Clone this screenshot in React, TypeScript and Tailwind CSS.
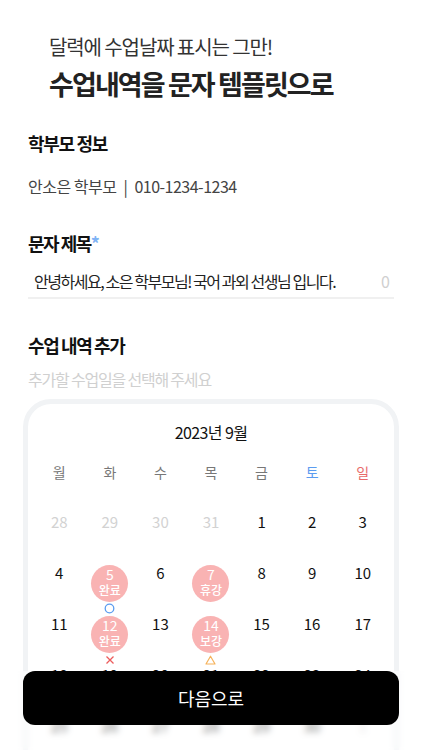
import React from 'react'

type Mark = 'o' | 'x' | 'tri'

interface Day {
  n: number
  muted?: boolean
  label?: string
  mark?: Mark
}

const weeks: Day[][] = [
  [{ n: 28, muted: true }, { n: 29, muted: true }, { n: 30, muted: true }, { n: 31, muted: true }, { n: 1 }, { n: 2 }, { n: 3 }],
  [{ n: 4 }, { n: 5, label: '완료', mark: 'o' }, { n: 6 }, { n: 7, label: '휴강' }, { n: 8 }, { n: 9 }, { n: 10 }],
  [{ n: 11 }, { n: 12, label: '완료', mark: 'x' }, { n: 13 }, { n: 14, label: '보강', mark: 'tri' }, { n: 15 }, { n: 16 }, { n: 17 }],
  [{ n: 18 }, { n: 19 }, { n: 20 }, { n: 21 }, { n: 22 }, { n: 23 }, { n: 24 }],
  [{ n: 25 }, { n: 26 }, { n: 27 }, { n: 28 }, { n: 29 }, { n: 30 }, { n: 1, muted: true }],
]

const weekdays = ['월', '화', '수', '목', '금', '토', '일']

function Marker({ type }: { type: Mark }) {
  if (type === 'o')
    return (
      <svg width="11" height="11" viewBox="0 0 11 11">
        <circle cx="5.5" cy="5.5" r="4.3" fill="none" stroke="#5b9cf0" strokeWidth="1.3" />
      </svg>
    )
  if (type === 'x')
    return (
      <svg width="10" height="10" viewBox="0 0 10 10">
        <path d="M1.5 1.5 L8.5 8.5 M8.5 1.5 L1.5 8.5" stroke="#ec5c5c" strokeWidth="1.3" />
      </svg>
    )
  return (
    <svg width="11" height="10" viewBox="0 0 11 10">
      <path d="M5.5 1.2 L10 9 L1 9 Z" fill="none" stroke="#f5b25a" strokeWidth="1.2" strokeLinejoin="round" />
    </svg>
  )
}

function DayCell({ day }: { day: Day }) {
  if (day.label) {
    return (
      <div className="flex h-[51px] flex-col items-center">
        <div className="flex h-[37px] w-[37px] flex-col items-center rounded-full bg-[#f9b3b3] pt-[2px] text-white">
          <span className="text-[14px] leading-[15px]">{day.n}</span>
          <span className="text-[12px] font-medium leading-[15px]">{day.label}</span>
        </div>
        {day.mark && (
          <div className="mt-[1px] flex h-[11px] items-center">
            <Marker type={day.mark} />
          </div>
        )}
      </div>
    )
  }
  return (
    <div className="flex h-[51px] flex-col items-center">
      <span className={`text-[15px] leading-[16px] ${day.muted ? 'text-[#d2d2d2]' : 'text-[#111]'}`}>{day.n}</span>
    </div>
  )
}

export default function App() {
  return (
    <div className="relative min-h-[750px] bg-white font-['Noto_Sans_CJK_KR','Noto_Sans',sans-serif]">
      <div className="px-[49px] pt-[35px]">
        <p className="text-[20px] leading-[24px] tracking-[-1.1px] text-[#333]">달력에 수업날짜 표시는 그만!</p>
        <h1 className="mt-[9px] text-[27px] font-bold leading-[32px] tracking-[-1.9px] text-[#222]">
          수업내역을 문자 템플릿으로
        </h1>
      </div>

      <div className="px-[28px]">
        <h2 className="mt-[32px] text-[18px] font-bold leading-[22px] tracking-[-1.3px] text-[#111]">학부모 정보</h2>
        <p className="mt-[22px] text-[16px] leading-[20px] tracking-[-0.5px] text-[#444]">
          안소은 학부모 <span className="mx-[4px]">|</span> 010-1234-1234
        </p>

        <h2 className="mt-[36px] text-[18px] font-bold leading-[22px] tracking-[-1.5px] text-[#111]">
          문자 제목<span className="text-[#7fb3f5]">*</span>
        </h2>
        <div className="mt-[17px] flex items-center justify-between border-b-2 border-[#f0f0f0] pb-[6px] pl-[6px] pr-[4px]">
          <span className="text-[16px] leading-[20px] tracking-[-1.45px] text-[#222]">
            안녕하세요, 소은 학부모님! 국어 과외 선생님 입니다.
          </span>
          <span className="text-[16px] leading-[20px] text-[#cfcfcf]">0</span>
        </div>

        <h2 className="mt-[35px] text-[18px] font-bold leading-[22px] tracking-[-1.4px] text-[#111]">수업 내역 추가</h2>
        <p className="mt-[13px] text-[16px] leading-[20px] tracking-[-1.2px] text-[#d0d0d0]">추가할 수업일을 선택해 주세요</p>
      </div>

      <div className="mx-[23px] mt-[10px] rounded-[28px] border-[5px] border-[#f1f3f5] pb-[20px] pt-[16px]">
        <p className="text-center text-[16px] leading-[24px] tracking-[-0.6px] text-[#111]">2023년 9월</p>
        <div className="mx-auto mt-[18px] grid w-[354px] grid-cols-7">
          {weekdays.map((w, i) => (
            <span
              key={w}
              className={`text-center text-[14px] leading-[20px] ${
                i === 5 ? 'text-[#5b9cf0]' : i === 6 ? 'text-[#e86a6a]' : 'text-[#777]'
              }`}
            >
              {w}
            </span>
          ))}
        </div>
        <div className="mx-auto mt-[32px] grid w-[354px] grid-cols-7">
          {weeks.flat().map((d, i) => (
            <DayCell key={i} day={d} />
          ))}
        </div>
      </div>

      <div className="fixed inset-x-0 bottom-0 h-[79px] bg-white/40 backdrop-blur-[3px]">
        <button className="mx-[23px] flex h-[54px] w-[376px] items-center justify-center rounded-[12px] bg-black text-[18px] text-white">
          다음으로
        </button>
      </div>
    </div>
  )
}
